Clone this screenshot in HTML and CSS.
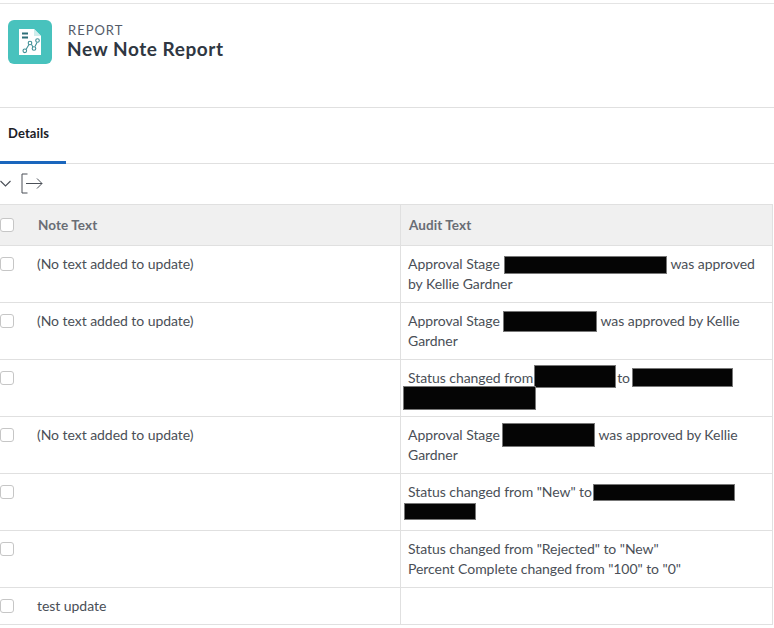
FILE: index.html
```html
<!DOCTYPE html>
<html lang="en">
<head>
<meta charset="utf-8">
<title>New Note Report</title>
<link rel="stylesheet" href="styles.css">
</head>
<body>
<div class="page">
  <header class="header">
    <div class="app-icon">
      <svg width="22" height="26" viewBox="0 0 22 26">
        <path d="M0 0H15L22 7V26H0Z" fill="#fff"/>
        <path d="M15 0L22 7H15Z" fill="#cfeeec"/>
        <path d="M3 4.5H9M3 8.5H9" stroke="#2d6f78" stroke-width="2"/>
        <g fill="none" stroke="#3f8f95" stroke-width="1.1">
          <path d="M7 20.5L10 15.5M12.5 15.5L14 18M16 17.5L18 13.5"/>
          <circle cx="5.8" cy="21.8" r="1.8"/>
          <circle cx="11" cy="14" r="1.8"/>
          <circle cx="15" cy="19.5" r="1.8"/>
          <circle cx="18.5" cy="11.5" r="1.8"/>
        </g>
      </svg>
    </div>
    <div class="titles">
      <div class="eyebrow">REPORT</div>
      <h1 class="title">New Note Report</h1>
    </div>
  </header>
  <nav class="tabs"><a class="tab">Details</a></nav>
  <div class="toolbar">
    <svg class="chev" width="11" height="7" viewBox="0 0 11 7"><path d="M0.5 1L5.5 6L10.5 1" fill="none" stroke="#4a4f57" stroke-width="1.1"/></svg>
    <svg class="export" width="22" height="21" viewBox="0 0 22 21"><path d="M6.5 1H1V20H6.5M5 10.5H21M16 5.5L21 10.5L16 15.5" fill="none" stroke="#4a4f57" stroke-width="1"/></svg>
  </div>
  <table class="grid">
    <colgroup><col class="c-check"><col class="c-note"><col class="c-audit"></colgroup>
    <thead>
      <tr>
        <th class="check"><span class="box"></span></th>
        <th class="note">Note Text</th>
        <th class="audit">Audit Text</th>
      </tr>
    </thead>
    <tbody>
      <tr>
        <td class="check"><span class="box"></span></td>
        <td class="note">(No text added to update)</td>
        <td class="audit">Approval Stage<span class="mark m1"></span> was approved by Kellie Gardner</td>
      </tr>
      <tr>
        <td class="check"><span class="box"></span></td>
        <td class="note">(No text added to update)</td>
        <td class="audit">Approval Stage<span class="mark m2"></span> was approved by Kellie Gardner</td>
      </tr>
      <tr>
        <td class="check"><span class="box"></span></td>
        <td class="note"></td>
        <td class="audit">Status changed from<span class="mark m3"></span> to <span class="mark m4"></span><br><span class="mark m5"></span></td>
      </tr>
      <tr>
        <td class="check"><span class="box"></span></td>
        <td class="note">(No text added to update)</td>
        <td class="audit">Approval Stage<span class="mark m6"></span> was approved by Kellie Gardner</td>
      </tr>
      <tr>
        <td class="check"><span class="box"></span></td>
        <td class="note"></td>
        <td class="audit">Status changed from "New" to<span class="mark m7"></span><br><span class="mark m8"></span></td>
      </tr>
      <tr>
        <td class="check"><span class="box"></span></td>
        <td class="note"></td>
        <td class="audit">Status changed from "Rejected" to "New"<br>Percent Complete changed from "100" to "0"</td>
      </tr>
      <tr class="short">
        <td class="check"><span class="box"></span></td>
        <td class="note">test update</td>
        <td class="audit"></td>
      </tr>
    </tbody>
  </table>
</div>
</body>
</html>
```
FILE: styles.css
```css
* { box-sizing: border-box; }
html, body { margin: 0; padding: 0; background: #fff; }
body { font-family: "Lato", "Liberation Sans", sans-serif; color: #4a4f57; overflow: hidden; }
.page { width: 774px; height: 628px; overflow: hidden; }

.header {
  border-top: 1px solid #e4e4e4;
  margin-top: 3px;
  border-bottom: 1px solid #e0e0e0;
  padding: 16px 8px 0;
  display: flex;
  align-items: flex-start;
  gap: 15px;
  height: 105px;
}
.app-icon {
  width: 44px; height: 44px;
  background: #48c2bd;
  border-radius: 6px;
  display: flex; align-items: center; justify-content: center;
}
.titles { padding-top: 2px; }
.eyebrow { font-size: 13px; line-height: 16px; letter-spacing: 1px; color: #545b68; padding-left: 1px; }
.title { margin: 0; font-size: 19px; line-height: 22px; font-weight: 700; color: #2f3742; letter-spacing: 0.55px; }

.tabs { height: 56px; border-bottom: 1px solid #e0e0e0; display: flex; }
.tab {
  width: 66px; height: 56px;
  padding: 17px 0 0 8px;
  font-size: 13px; line-height: 16px; font-weight: 700; color: #1c2026;
  letter-spacing: 0.1px;
  border-bottom: 3px solid #1a66bd;
  margin-bottom: -1px;
}

.toolbar { height: 40px; display: flex; align-items: flex-start; padding-top: 9px; }
.chev { margin-top: 7px; }
.export { margin-left: 10px; }

.grid { border-collapse: collapse; table-layout: fixed; width: 772px; font-size: 14px; letter-spacing: -0.05px; line-height: 20px; }
.c-check { width: 30px; }
.c-note { width: 370px; }
.c-audit { width: 372px; }
th, td { padding: 0; vertical-align: top; text-align: left; border-top: 1px solid #e0e0e0; border-bottom: 1px solid #e0e0e0; }
th { height: 41px; background: #f0f0f0; font-size: 13.5px; letter-spacing: 0.08px; font-weight: 700; color: #696d75; vertical-align: middle; }
td { height: 57px; padding-top: 8px; }
.short td { height: 37px; }
.note { padding-left: 7px; }
th.note { padding-left: 8px; }
.audit { border-left: 1px solid #e0e0e0; border-right: 1px solid #e0e0e0; padding-left: 7.5px; padding-right: 8px; }
th.audit { padding-left: 8.5px; }
.box {
  display: block; width: 14px; height: 14px;
  background: #fff; border: 1px solid #c6c6c6; border-radius: 3px;
}
td.check { padding-top: 11px; }

.mark {
  display: inline-block;
  position: relative;
  background: #050505;
  border: 1px solid #777;
  vertical-align: middle;
  margin-top: -12px; margin-bottom: -12px;
}
.m1 { width: 163px; height: 18px; margin-left: 4.5px; }
.m2 { width: 94px; height: 21px; margin-left: 3.5px; top: -1px; }
.m3 { width: 82px; height: 23px; margin-left: 0.5px; margin-right: -2px; top: -3px; }
.m4 { width: 101px; height: 19px; margin-left: -2px; top: -2px; }
.m5 { width: 133px; height: 24px; margin-left: -5.5px; top: -1px; }
.m6 { width: 93px; height: 24px; margin-left: 2.5px; top: -1px; }
.m7 { width: 142px; height: 17px; margin-left: 1.5px; top: -1px; }
.m8 { width: 72px; height: 17px; margin-left: -4.5px; top: -2px; }
```
